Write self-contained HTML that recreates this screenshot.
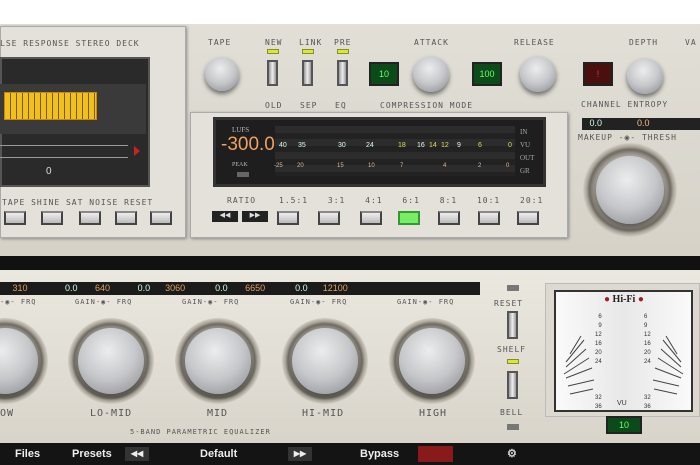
<!DOCTYPE html><html><head><style>
*{margin:0;padding:0;box-sizing:border-box}
body{width:700px;height:465px;overflow:hidden;background:#fff;position:relative;font-family:"Liberation Sans",sans-serif}
.a{position:absolute}
.lbl{position:absolute;font-size:8px;color:#555;letter-spacing:1px;font-family:"DejaVu Sans Mono","Liberation Mono",monospace}
.btn{position:absolute;width:22px;height:14px;background:linear-gradient(#eee,#bbb);border:2px solid #444;border-top-color:#888}
.knob{position:absolute;border-radius:50%;background:radial-gradient(circle at 45% 35%,#eceded,#c6c7ca 50%,#85878b 100%);box-shadow:0 3px 5px rgba(0,0,0,.5)}
.ring{position:absolute;border-radius:50%;background:radial-gradient(closest-side,#b5b0a6 72%,#6e6a62 86%,#a8a398 92%,#d4cfc5 100%);}
.led{position:absolute;width:12px;height:5px;background:#d8e83a;border:1px solid #8a9020}
.gled{position:absolute;background:#0d4a1a;border:2px solid #222;color:#6f6;font-size:9px;text-align:center;font-family:"Liberation Sans",sans-serif}
.sw{position:absolute;width:11px;height:26px;background:linear-gradient(90deg,#999,#eee,#999);border:2px solid #555}
.s{position:absolute;font-size:7px;color:#dfe}
.b{position:absolute;font-size:6px;color:#db9}
</style></head><body>
<div class="a" style="left:0;top:24px;width:700px;height:232px;background:linear-gradient(#e2dfd7,#d6d2c8)"></div>
<div class="a" style="left:0;top:26px;width:186px;height:212px;background:#e4e1da;border:1px solid #aaa;box-shadow:1px 1px 3px #888"></div>
<div class="lbl" style="left:0;top:39px">LSE RESPONSE STEREO DECK</div>
<div class="a" style="left:0;top:57px;width:150px;height:130px;background:#2a2a2a;border:2px solid #555"></div>
<div class="a" style="left:0;top:84px;width:146px;height:50px;background:#3a3a3a"></div>
<div class="a" style="left:4px;top:92px;width:93px;height:28px;background:repeating-linear-gradient(90deg,#f0c020 0 5px,#7a5a00 5px 6px);border:1px solid #c80"></div>
<div class="a" style="left:0;top:145px;width:128px;height:1px;background:#999"></div>
<div class="a" style="left:0;top:157px;width:128px;height:1px;background:#999"></div>
<div class="a" style="left:134px;top:146px;width:0;height:0;border-left:6px solid #c22;border-top:5px solid transparent;border-bottom:5px solid transparent"></div>
<div class="a" style="left:46px;top:166px;color:#ddd;font-size:10px">0</div>
<div class="lbl" style="left:2px;top:198px">TAPE SHINE  SAT NOISE RESET</div>
<div class="btn" style="left:4px;top:211px"></div><div class="btn" style="left:41px;top:211px"></div><div class="btn" style="left:79px;top:211px"></div><div class="btn" style="left:115px;top:211px"></div><div class="btn" style="left:150px;top:211px"></div>
<div class="lbl" style="left:208px;top:38px">TAPE</div>
<div class="knob" style="left:205px;top:57px;width:34px;height:34px"></div>
<div class="lbl" style="left:265px;top:38px">NEW</div><div class="lbl" style="left:299px;top:38px">LINK</div><div class="lbl" style="left:334px;top:38px">PRE</div>
<div class="led" style="left:267px;top:49px"></div><div class="led" style="left:302px;top:49px"></div><div class="led" style="left:337px;top:49px"></div>
<div class="sw" style="left:267px;top:60px"></div><div class="sw" style="left:302px;top:60px"></div><div class="sw" style="left:337px;top:60px"></div>
<div class="lbl" style="left:265px;top:101px">OLD</div><div class="lbl" style="left:300px;top:101px">SEP</div><div class="lbl" style="left:335px;top:101px">EQ</div>
<div class="lbl" style="left:414px;top:38px">ATTACK</div><div class="lbl" style="left:514px;top:38px">RELEASE</div><div class="lbl" style="left:629px;top:38px">DEPTH</div><div class="lbl" style="left:685px;top:38px">VA</div>
<div class="gled" style="left:369px;top:62px;width:30px;height:24px;line-height:20px">10</div>
<div class="gled" style="left:472px;top:62px;width:30px;height:24px;line-height:20px">100</div>
<div class="gled" style="left:583px;top:62px;width:30px;height:24px;line-height:20px;background:#4a1010;color:#e33">!</div>
<div class="knob" style="left:413px;top:56px;width:36px;height:36px"></div>
<div class="knob" style="left:520px;top:56px;width:36px;height:36px"></div>
<div class="knob" style="left:627px;top:58px;width:36px;height:36px"></div>
<div class="lbl" style="left:380px;top:101px">COMPRESSION MODE</div>
<div class="lbl" style="left:581px;top:100px">CHANNEL ENTROPY</div>
<div class="a" style="left:190px;top:112px;width:378px;height:126px;background:#e4e1da;border:1px solid #aaa;box-shadow:1px 1px 3px #888"></div>
<div class="a" style="left:213px;top:117px;width:333px;height:70px;background:#1e1e1e;border:3px solid #333"></div>
<div class="a" style="left:232px;top:126px;color:#bbb;font-size:7px;font-family:'Liberation Serif',serif">LUFS</div>
<div class="a" style="left:221px;top:134px;color:#f0a060;font-size:19px">-300.0</div>
<div class="a" style="left:232px;top:162px;color:#bbb;font-size:6px;font-family:'Liberation Serif',serif">PEAK</div>
<div class="a" style="left:237px;top:172px;width:12px;height:5px;background:#666"></div>
<div class="a" style="left:275px;top:126px;width:240px;height:50px;background:repeating-linear-gradient(#2c2c2c 0 7px,#222 7px 13px)"></div>
<span class="s" style="left:279px;top:142px">40</span><span class="s" style="left:298px;top:142px">35</span><span class="s" style="left:338px;top:142px">30</span><span class="s" style="left:366px;top:142px">24</span><span class="s" style="left:398px;top:142px;color:#dd5">18</span><span class="s" style="left:417px;top:142px">16</span><span class="s" style="left:429px;top:142px;color:#dd5">14</span><span class="s" style="left:441px;top:142px;color:#dd5">12</span><span class="s" style="left:457px;top:142px">9</span><span class="s" style="left:478px;top:142px;color:#dd5">6</span><span class="s" style="left:508px;top:142px;color:#dd5">0</span>
<span class="b" style="left:274px;top:163px">-25</span><span class="b" style="left:297px;top:163px">20</span><span class="b" style="left:337px;top:163px">15</span><span class="b" style="left:368px;top:163px">10</span><span class="b" style="left:400px;top:163px">7</span><span class="b" style="left:443px;top:163px">4</span><span class="b" style="left:478px;top:163px">2</span><span class="b" style="left:506px;top:163px">0</span>
<div class="a" style="left:520px;top:126px;color:#aaa;font-size:7px;line-height:13px;font-family:'Liberation Serif',serif">IN<br>VU<br>OUT<br>GR</div>
<div class="lbl" style="left:227px;top:196px">RATIO</div>
<div class="lbl" style="left:279px;top:196px;word-spacing:14px">1.5:1 3:1 4:1 6:1 8:1 10:1 20:1</div>
<div class="a" style="left:212px;top:211px;width:26px;height:11px;background:#222;color:#ddd;font-size:7px;text-align:center">◀◀</div>
<div class="a" style="left:242px;top:211px;width:26px;height:11px;background:#222;color:#ddd;font-size:7px;text-align:center">▶▶</div>
<div class="btn" style="left:277px;top:211px"></div><div class="btn" style="left:318px;top:211px"></div><div class="btn" style="left:360px;top:211px"></div>
<div class="btn" style="left:398px;top:211px;background:#7e6;border-color:#393"></div>
<div class="btn" style="left:438px;top:211px"></div><div class="btn" style="left:478px;top:211px"></div><div class="btn" style="left:517px;top:211px"></div>
<div class="a" style="left:582px;top:118px;width:118px;height:12px;background:#222;color:#cfd;font-size:9px;white-space:pre">   0.0              <span style="color:#eb8">0.0</span></div>
<div class="lbl" style="left:578px;top:133px">MAKEUP -◉- THRESH</div>
<div class="ring" style="left:583px;top:143px;width:94px;height:94px"></div>
<div class="knob" style="left:596px;top:156px;width:68px;height:68px"></div>
<div class="a" style="left:0;top:256px;width:700px;height:14px;background:#111"></div>
<div class="a" style="left:0;top:270px;width:700px;height:173px;background:linear-gradient(#ebe8e0,#d8d4ca)"></div>
<div class="a" style="left:0;top:282px;width:480px;height:13px;background:#1b1b1b"></div>
<div class="a" style="left:0;top:282px;font-size:9px;color:#dda060;white-space:pre;line-height:13px">     310               <span style="color:#cfd">0.0</span>       640           <span style="color:#cfd">0.0</span>      3060            <span style="color:#cfd">0.0</span>       6650            <span style="color:#cfd">0.0</span>      12100</div>
<div class="lbl" style="left:0;top:298px;font-size:7px">-◉- FRQ</div>
<div class="lbl" style="left:75px;top:298px;font-size:7px">GAIN-◉- FRQ</div>
<div class="lbl" style="left:182px;top:298px;font-size:7px">GAIN-◉- FRQ</div>
<div class="lbl" style="left:290px;top:298px;font-size:7px">GAIN-◉- FRQ</div>
<div class="lbl" style="left:397px;top:298px;font-size:7px">GAIN-◉- FRQ</div>
<div class="ring" style="left:-38px;top:318px;width:86px;height:86px"></div><div class="knob" style="left:-28px;top:328px;width:66px;height:66px"></div>
<div class="ring" style="left:68px;top:318px;width:86px;height:86px"></div><div class="knob" style="left:78px;top:328px;width:66px;height:66px"></div>
<div class="ring" style="left:175px;top:318px;width:86px;height:86px"></div><div class="knob" style="left:185px;top:328px;width:66px;height:66px"></div>
<div class="ring" style="left:282px;top:318px;width:86px;height:86px"></div><div class="knob" style="left:292px;top:328px;width:66px;height:66px"></div>
<div class="ring" style="left:389px;top:318px;width:86px;height:86px"></div><div class="knob" style="left:399px;top:328px;width:66px;height:66px"></div>
<div class="lbl" style="left:0;top:408px;font-size:10px">OW</div>
<div class="lbl" style="left:90px;top:408px;font-size:10px">LO-MID</div>
<div class="lbl" style="left:207px;top:408px;font-size:10px">MID</div>
<div class="lbl" style="left:302px;top:408px;font-size:10px">HI-MID</div>
<div class="lbl" style="left:419px;top:408px;font-size:10px">HIGH</div>
<div class="lbl" style="left:130px;top:428px;font-size:7px">5-BAND PARAMETRIC EQUALIZER</div>
<div class="a" style="left:507px;top:285px;width:12px;height:6px;background:#777"></div>
<div class="lbl" style="left:494px;top:299px">RESET</div>
<div class="sw" style="left:507px;top:311px;height:28px"></div>
<div class="lbl" style="left:497px;top:345px">SHELF</div>
<div class="led" style="left:507px;top:359px"></div>
<div class="sw" style="left:507px;top:371px;height:28px"></div>
<div class="lbl" style="left:500px;top:408px">BELL</div>
<div class="a" style="left:507px;top:424px;width:12px;height:6px;background:#777"></div>
<div class="a" style="left:545px;top:283px;width:155px;height:134px;background:#ddd9d0;border:1px solid #bbb"></div>
<div class="a" style="left:554px;top:290px;width:139px;height:122px;background:linear-gradient(90deg,#fafafa,#e8e8e8 50%,#fafafa);border:2px solid #333"></div>
<svg class="a" style="left:556px;top:292px" width="135" height="118" stroke="#444" stroke-width="1">
<line x1="25" y1="44" x2="14" y2="62"/><line x1="28" y1="48" x2="10" y2="70"/><line x1="30" y1="57" x2="10" y2="75"/><line x1="33" y1="66" x2="8" y2="82"/><line x1="36" y1="76" x2="10" y2="86"/><line x1="38" y1="88" x2="12" y2="94"/><line x1="37" y1="97" x2="14" y2="102"/>
<line x1="110" y1="44" x2="121" y2="62"/><line x1="107" y1="48" x2="125" y2="70"/><line x1="105" y1="57" x2="125" y2="75"/><line x1="102" y1="66" x2="127" y2="82"/><line x1="99" y1="76" x2="125" y2="86"/><line x1="97" y1="88" x2="123" y2="94"/><line x1="98" y1="97" x2="121" y2="102"/>
</svg>
<div class="a" style="left:604px;top:294px;font-size:10px;font-weight:bold;font-family:'Liberation Serif',serif;color:#222"><span style="color:#922">●</span> Hi-Fi <span style="color:#922">●</span></div>
<div class="a" style="left:595px;top:313px;font-size:6px;color:#333;line-height:9px;text-align:right">6<br>9<br>12<br>16<br>20<br>24<br><br><br><br>32<br>36</div>
<div class="a" style="left:644px;top:313px;font-size:6px;color:#333;line-height:9px">6<br>9<br>12<br>16<br>20<br>24<br><br><br><br>32<br>36</div>
<div class="a" style="left:617px;top:400px;font-size:7px;color:#333">VU</div>
<div class="gled" style="left:606px;top:416px;width:36px;height:18px;line-height:14px">10</div>
<div class="a" style="left:0;top:443px;width:700px;height:22px;background:#141414;color:#eee;font-size:11px;font-weight:bold;line-height:22px">
<span class="a" style="left:15px">Files</span><span class="a" style="left:72px">Presets</span>
<span class="a" style="left:125px;top:4px;width:24px;height:14px;background:#333;font-size:8px;line-height:14px;text-align:center">◀◀</span>
<span class="a" style="left:200px">Default</span>
<span class="a" style="left:288px;top:4px;width:24px;height:14px;background:#333;font-size:8px;line-height:14px;text-align:center">▶▶</span>
<span class="a" style="left:360px">Bypass</span>
<span class="a" style="left:418px;top:3px;width:35px;height:16px;background:#8a1a1a"></span>
<span class="a" style="left:507px;color:#ccc">⚙</span></div>
</body></html>
